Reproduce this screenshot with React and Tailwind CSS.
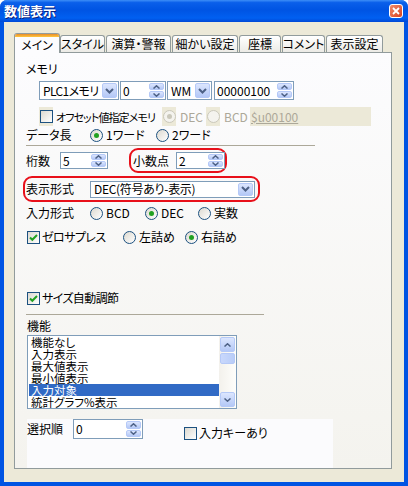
import React from 'react';

const FONT = "font-['Noto_Sans_CJK_JP',sans-serif] [font-feature-settings:'palt']";

function Chevron() {
  return (
    <svg width="9" height="6" viewBox="0 0 9 6">
      <path d="M1 1l3.5 3.5L8 1" stroke="#4D6185" strokeWidth="2" fill="none" />
    </svg>
  );
}

function Arrow({ up }) {
  return (
    <svg width="7" height="4" viewBox="0 0 7 4">
      <path d={up ? 'M0.5 3.5L3.5 0.8L6.5 3.5' : 'M0.5 0.5L3.5 3.2L6.5 0.5'} stroke="#4D6185" strokeWidth="1.5" fill="none" />
    </svg>
  );
}

function Combo({ cls, text, tcls = '' }) {
  return (
    <div className={`flex items-stretch border border-[#7F9DB9] bg-white p-px ${cls}`}>
      <span className={`flex-1 flex items-center pl-[2px] leading-none whitespace-nowrap ${tcls}`}>{text}</span>
      <div className="w-[15px] rounded-[2px] border border-[#B5C9F7] bg-gradient-to-b from-[#DCE6FE] to-[#B4C8F6] flex items-center justify-center">
        <Chevron />
      </div>
    </div>
  );
}

function Spin({ cls, text }) {
  return (
    <div className={`flex items-stretch border border-[#7F9DB9] bg-white p-px ${cls}`}>
      <span className="flex-1 flex items-center pl-[1px] leading-none whitespace-nowrap">{text}</span>
      <div className="w-[15px] flex flex-col gap-px">
        <div className="flex-1 rounded-[2px] border border-[#B5C9F7] bg-gradient-to-b from-[#DCE6FE] to-[#B4C8F6] flex items-center justify-center">
          <Arrow up />
        </div>
        <div className="flex-1 rounded-[2px] border border-[#B5C9F7] bg-gradient-to-b from-[#DCE6FE] to-[#B4C8F6] flex items-center justify-center">
          <Arrow />
        </div>
      </div>
    </div>
  );
}

function Radio({ on, disabled }) {
  return (
    <span className={`w-[13px] h-[13px] rounded-full border shrink-0 flex items-center justify-center ${disabled ? 'border-[#CAC8BB] bg-[#F4F3EE]' : 'border-[#1C5180] bg-gradient-to-br from-[#DCD9D0] to-white'}`}>
      {on && <span className={`w-[5px] h-[5px] rounded-full ${disabled ? 'bg-[#CAC8BB]' : 'bg-[#21A121]'}`} />}
    </span>
  );
}

function Check({ on }) {
  return (
    <span className="w-[13px] h-[13px] border border-[#1C5180] bg-gradient-to-br from-[#DCD9D0] to-white shrink-0 flex items-center justify-center">
      {on && (
        <svg width="9" height="9" viewBox="0 0 9 9">
          <path d="M1 4.5l2.3 2.3L8 2" stroke="#21A121" strokeWidth="2" fill="none" />
        </svg>
      )}
    </span>
  );
}

function Opt({ cls, on, label }) {
  return (
    <div className={`flex items-center gap-[3px] ${cls}`}>
      <Radio on={on} />
      <span>{label}</span>
    </div>
  );
}

const tabs = [
  { label: 'スタイル', w: 'w-[45px]' },
  { label: '演算・警報', w: 'w-[65px]' },
  { label: '細かい設定', w: 'w-[66px]' },
  { label: '座標', w: 'w-[42px]' },
  { label: 'コメント', w: 'w-[43px]' },
  { label: '表示設定', w: 'w-[57px]' },
];

const items = ['機能なし', '入力表示', '最大値表示', '最小値表示', '入力対象', '統計グラフ%表示'];

export default function App() {
  return (
    <div className={`w-[408px] h-[486px] bg-[#0054E3] rounded-t-[7px] flex flex-col text-[12px] leading-[14px] text-black ${FONT}`}>
      <div className="h-[22px] shrink-0 rounded-t-[7px] bg-[linear-gradient(180deg,#3D8EF7_0%,#0A5FEA_12%,#0054E3_45%,#0160F1_82%,#0048D6_100%)] flex items-center justify-between pl-[4px] pr-[5px]">
        <span className="text-white font-bold text-[13px] [text-shadow:1px_1px_0_#0A1E7A]">数値表示</span>
        <div className="w-[14px] h-[14px] rounded-[3px] border border-white bg-gradient-to-br from-[#F08A6A] to-[#D6401C] flex items-center justify-center">
          <svg width="8" height="8" viewBox="0 0 8 8">
            <path d="M1 1l6 6M7 1L1 7" stroke="white" strokeWidth="1.8" />
          </svg>
        </div>
      </div>

      <div className="flex-1 mx-[4px] mb-[4px] bg-[#ECE9D8] pt-[11px] pl-[10px] pr-[12px] pb-[13px] flex flex-col">
        <div className="h-[19px] flex items-end shrink-0">
          <div className="relative z-10 w-[46px] h-[20px] -mb-px border border-[#919B9C] border-b-0 rounded-t-[3px] bg-[#FCFCFE] flex flex-col overflow-hidden">
            <div className="h-[3px] bg-gradient-to-b from-[#E68B2C] to-[#FFC83C]" />
            <div className="flex-1 flex items-center justify-center">メイン</div>
          </div>
          {tabs.map((t, i) => (
            <div key={t.label} className={`${t.w} ${i === 0 ? '' : 'ml-px'} h-[17px] border border-[#919B9C] border-b-0 rounded-t-[3px] bg-gradient-to-b from-white to-[#ECEBE6] flex items-center justify-center whitespace-nowrap`}>
              {t.label}
            </div>
          ))}
        </div>

        <div className="flex-1 border border-[#919B9C] bg-gradient-to-b from-[#FCFCFE] to-[#F4F3EE] flex flex-col pl-[11px] pt-[9px]">
          <div className="h-[14px]">メモリ</div>

          <div className="mt-[5px] h-[19px] flex ml-[13px]">
            <Combo cls="w-[80px]" text="PLC1メモリ" tcls="tracking-[-0.6px]" />
            <Spin cls="ml-px w-[46px]" text="0" />
            <Combo cls="ml-px w-[45px]" text="WM" />
            <Spin cls="ml-[2px] w-[80px]" text="00000100" />
          </div>

          <div className="mt-[7px] h-[19px] flex items-center ml-[13px]">
            <div className="w-[14px] h-full bg-[#ECE9D8] flex items-center justify-center">
              <Check />
            </div>
            <span className="w-[109px] pl-[3px] whitespace-nowrap overflow-hidden text-[11px] tracking-[-0.9px]">オフセット値指定メモリ</span>
            <div className="w-[14px] h-full bg-[#ECE9D8] flex items-center justify-center">
              <Radio on disabled />
            </div>
            <span className="w-[30px] pl-[4px] text-[#ACA899]">DEC</span>
            <div className="w-[14px] h-full bg-[#ECE9D8] flex items-center justify-center">
              <Radio disabled />
            </div>
            <span className="w-[30px] pl-[4px] text-[#ACA899]">BCD</span>
            <div className="w-[121px] h-full bg-[#ECE9D8] flex items-center pl-px">
              <span className="underline text-[#ACA899]">$u00100</span>
            </div>
          </div>

          <div className="mt-[2px] h-[14px] flex items-center">
            <span className="w-[64px]">データ長</span>
            <Opt cls="w-[66px]" on label="1ワード" />
            <Opt label="2ワード" />
          </div>

          <div className="mt-[3px] h-px w-[289px] bg-[#ACA899]" />

          <div className="mt-[2px] h-[25px] flex items-center">
            <span className="w-[34px]">桁数</span>
            <Spin cls="w-[48px] h-[17px]" text="5" />
            <div className="ml-[21px] w-[98px] h-[25px] border-2 border-[#E8101A] rounded-[9px] flex items-center pl-[2px]">
              <span className="w-[43px]">小数点</span>
              <Spin cls="w-[49px] h-[17px]" text="2" />
            </div>
          </div>

          <div className="mt-[3px] h-[26px] ml-[-3px] w-[237px] border-2 border-[#E8101A] rounded-[9px] flex items-center pl-px">
            <span className="w-[64px]">表示形式</span>
            <Combo cls="w-[165px] h-[17px]" text="DEC(符号あり-表示)" tcls="tracking-[-0.3px]" />
          </div>

          <div className="mt-[4px] h-[14px] flex items-center">
            <span className="w-[64px]">入力形式</span>
            <Opt cls="w-[55px]" label="BCD" />
            <Opt cls="w-[53px]" on label="DEC" />
            <Opt label="実数" />
          </div>

          <div className="mt-[10px] h-[14px] flex items-center ml-px">
            <Check on />
            <span className="w-[83px] pl-[2px] tracking-[-0.6px]">ゼロサプレス</span>
            <Opt cls="w-[62px]" label="左詰め" />
            <Opt on label="右詰め" />
          </div>

          <div className="mt-[47px] h-[14px] flex items-center ml-px">
            <Check on />
            <span className="pl-[2px] tracking-[-0.6px]">サイズ自動調節</span>
          </div>

          <div className="mt-[9px] h-px w-[238px] bg-[#ACA899]" />

          <div className="mt-[4px] h-[14px] ml-px">機能</div>

          <div className="mt-[2px] ml-px w-[210px] h-[74px] border border-[#7F9DB9] bg-white flex">
            <div className="flex-1 overflow-hidden pl-px">
              {items.map((it, i) => (
                <div key={it} className={`h-[12px] leading-[12px] text-[11.5px] pl-[2px] whitespace-nowrap ${i === 4 ? 'bg-[#316AC5] text-white' : ''}`}>
                  {it}
                </div>
              ))}
            </div>
            <div className="w-[17px] bg-gradient-to-r from-[#F3F1EC] to-[#FEFEFB] flex flex-col items-center pt-px pb-px">
              <div className="w-[15px] h-[15px] rounded-[2px] border border-[#B5C9F7] bg-gradient-to-b from-[#DCE6FE] to-[#B4C8F6] flex items-center justify-center">
                <Arrow up />
              </div>
              <div className="mt-px w-[15px] h-[11px] rounded-[2px] border border-[#B5C9F7] bg-gradient-to-r from-[#C9D8FC] to-[#B9CDF8]" />
              <div className="flex-1" />
              <div className="w-[15px] h-[15px] rounded-[2px] border border-[#B5C9F7] bg-gradient-to-b from-[#DCE6FE] to-[#B4C8F6] flex items-center justify-center">
                <Arrow />
              </div>
            </div>
          </div>

          <div className="mt-[10px] ml-px w-[306px] h-[49px] bg-[#FBFBFD] flex items-start">
            <span className="w-[46px] leading-[20px]">選択順</span>
            <Spin cls="w-[70px] h-[20px]" text="0" />
            <div className="ml-[41px] mt-[7px] flex items-center">
              <Check />
              <span className="pl-[2px]">入力キーあり</span>
            </div>
          </div>
        </div>
      </div>
    </div>
  );
}
